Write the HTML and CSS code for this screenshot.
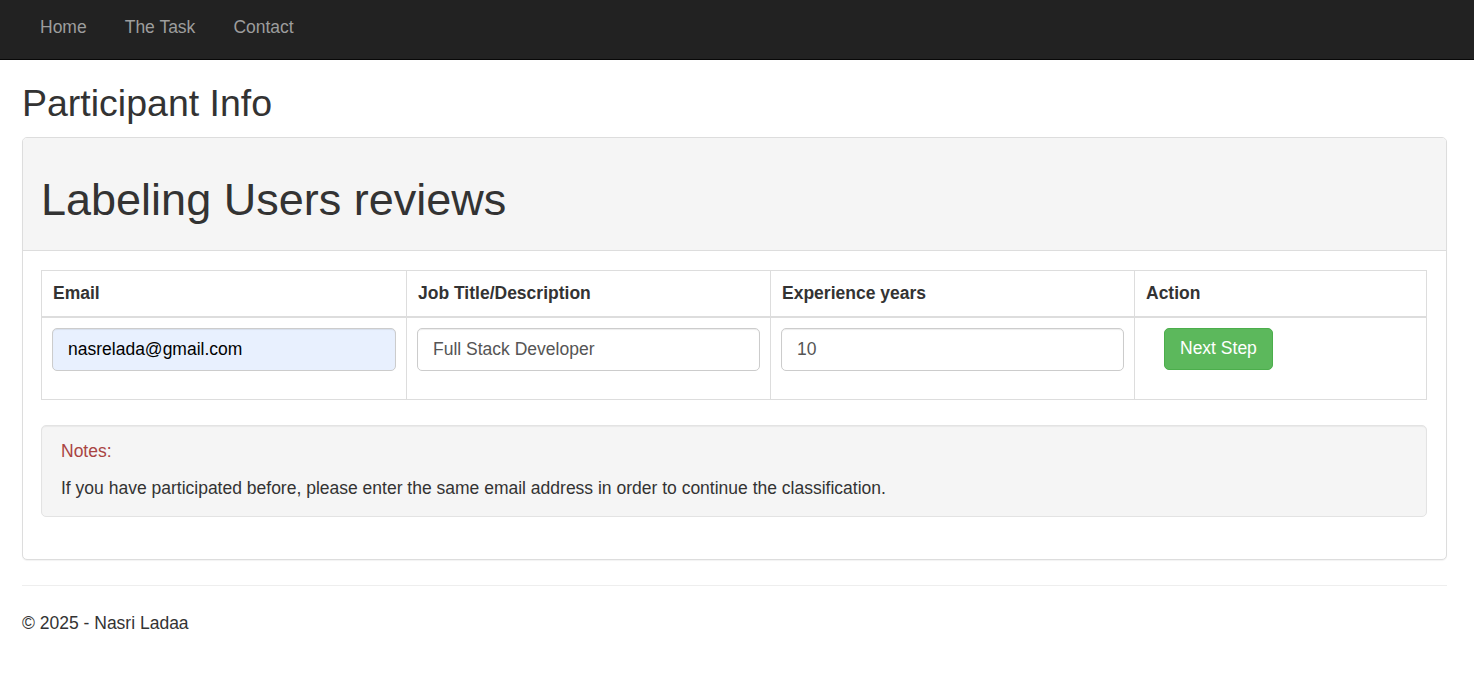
FILE: index.html
```html
<!DOCTYPE html>
<html lang="en">
<head>
<meta charset="utf-8">
<title>Participant Info</title>
<link rel="stylesheet" href="styles.css">
</head>
<body>
<nav class="navbar">
  <ul class="nav">
    <li><a href="#">Home</a></li>
    <li><a href="#">The Task</a></li>
    <li><a href="#">Contact</a></li>
  </ul>
</nav>
<div class="page">
  <h2 class="page-title">Participant Info</h2>
  <div class="panel">
    <div class="panel-heading">
      <h1 class="panel-title">Labeling Users reviews</h1>
    </div>
    <div class="panel-body">
      <table class="grid">
        <colgroup>
          <col class="c1"><col class="c2"><col class="c3"><col class="c4">
        </colgroup>
        <thead>
          <tr>
            <th>Email</th>
            <th>Job Title/Description</th>
            <th>Experience years</th>
            <th>Action</th>
          </tr>
        </thead>
        <tbody>
          <tr>
            <td><input class="field field-autofill" type="text" value="nasrelada@gmail.com"></td>
            <td><input class="field" type="text" value="Full Stack Developer"></td>
            <td><input class="field" type="text" value="10"></td>
            <td><button class="btn-success" type="button">Next Step</button></td>
          </tr>
        </tbody>
      </table>
      <div class="well">
        <p class="notes-title">Notes:</p>
        <p class="notes-text">If you have participated before, please enter the same email address in order to continue the classification.</p>
      </div>
    </div>
  </div>
  <hr class="divider">
  <footer class="footer">
    <p>&copy; 2025 - Nasri Ladaa</p>
  </footer>
</div>
</body>
</html>
```

FILE: styles.css
```css
* { box-sizing: border-box; }

html, body {
  margin: 0;
  padding: 0;
}

body {
  font-family: "Liberation Sans", Arial, Helvetica, sans-serif;
  font-size: 17.5px;
  line-height: 25px;
  color: #333;
  background: #fff;
}

.navbar {
  height: 60px;
  background: #222;
  border-bottom: 1px solid #080808;
  padding-left: 21px;
}

.nav {
  list-style: none;
  margin: 0;
  padding: 0;
  display: flex;
}

.nav a {
  display: block;
  padding: 15px 19px;
  color: #9d9d9d;
  text-decoration: none;
  font-size: 17.5px;
  line-height: 25px;
}

.page {
  padding: 0 27px 0 22px;
}

.page-title {
  font-size: 37.5px;
  font-weight: 500;
  line-height: 41.25px;
  margin: 23px 0 12.5px;
}

.panel {
  border: 1px solid #ddd;
  border-radius: 5px;
  background: #fff;
  box-shadow: 0 1px 1px rgba(0,0,0,.05);
  margin-bottom: 25px;
}

.panel-heading {
  background: #f5f5f5;
  border-bottom: 1px solid #ddd;
  border-radius: 4px 4px 0 0;
  padding: 12.5px 18px;
}

.panel-title {
  font-size: 45px;
  font-weight: 500;
  line-height: 49.5px;
  margin: 25px 0 12.5px;
}

.panel-body {
  padding: 18.75px 19px 18.75px 18px;
}

.grid {
  width: 100%;
  border-collapse: collapse;
  border-spacing: 0;
  table-layout: fixed;
  margin-bottom: 25px;
  border: 1px solid #ddd;
}

.c1 { width: 365px; }
.c2 { width: 364px; }
.c3 { width: 364px; }
.c4 { width: auto; }

.grid th,
.grid td {
  border: 1px solid #ddd;
  text-align: left;
  vertical-align: top;
}

.grid th {
  font-weight: bold;
  border-bottom: 2px solid #ddd;
  padding: 10px 11px;
}

.grid td {
  padding: 10px 10px 10px;
}

.field {
  display: block;
  width: 100%;
  height: 43px;
  padding: 7.5px 15px;
  font-family: inherit;
  font-size: 17.5px;
  line-height: 25px;
  color: #555;
  background: #fff;
  border: 1px solid #ccc;
  border-radius: 5px;
  box-shadow: inset 0 1px 1px rgba(0,0,0,.075);
  margin-bottom: 18px;
}

.field-autofill {
  background: #e8f0fe;
  color: #000;
}

.btn-success {
  display: inline-block;
  margin-left: 19px;
  height: 42px;
  padding: 7.5px 15px;
  font-family: inherit;
  font-size: 17.5px;
  line-height: 25px;
  color: #fff;
  background: #5cb85c;
  border: 1px solid #4cae4c;
  border-radius: 5px;
  cursor: pointer;
}

.well {
  background: #f5f5f5;
  border: 1px solid #e3e3e3;
  border-radius: 5px;
  box-shadow: inset 0 1px 1px rgba(0,0,0,.05);
  padding: 13px 19px 2px;
  margin-bottom: 24px;
}

.well p {
  margin: 0 0 12.5px;
}

.notes-title {
  color: #a94442;
}

.divider {
  border: 0;
  border-top: 1px solid #eee;
  margin: 0 0 25px;
}

.footer p {
  margin: 0 0 12.5px;
}
```
